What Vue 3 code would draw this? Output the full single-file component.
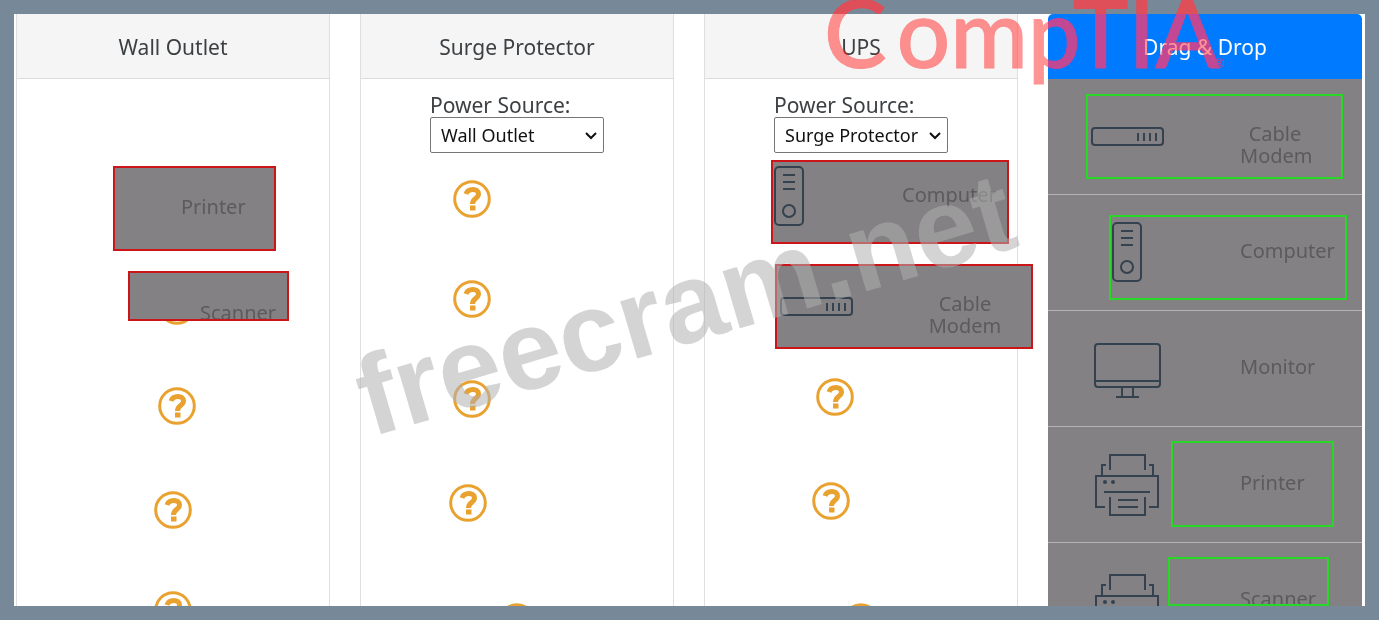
<template>
    <div class="page">
        <div class="board">
            <!-- shared device icons -->
            <svg class="sprite" aria-hidden="true">
                <symbol id="modem" viewBox="0 0 74 64">
                    <rect x="1" y="23" width="71" height="17" rx="3" />
                    <path d="M47 28v8M53 28v8M59 28v8M65 28v8" />
                </symbol>
                <symbol id="computer" viewBox="0 0 74 64">
                    <rect x="22" y="2" width="28" height="58" rx="4" />
                    <path d="M30 10h12M30 17h12M30 24h12" />
                    <circle cx="36" cy="46" r="6" />
                </symbol>
                <symbol id="monitor" viewBox="0 0 74 64">
                    <rect x="4" y="7" width="65" height="43" rx="3" />
                    <path d="M4 44h65M31 50v10M42 50v10M25 60h23" />
                </symbol>
                <symbol id="printer" viewBox="0 0 74 64">
                    <path d="M19 17V2h35v15M11 22V12h4M62 22V12h-4M14 54H5V23h62v31h-9M13 39h46" />
                    <path d="M19 44v18h35V44M27 47h20M27 54h20" />
                    <circle class="dot" cx="14" cy="29" r="2" />
                    <circle class="dot" cx="22" cy="29" r="2" />
                </symbol>
            </svg>

            <section v-for="col in columns" :key="col.title" class="column" :class="col.name">
                <h2 class="column-title">{{ col.title }}</h2>
                <div class="column-body">
                    <div v-if="col.source" class="source">
                        <label :for="col.name">Power Source:</label>
                        <div class="select-wrap">
                            <select :id="col.name" v-model="col.source">
                                <option v-for="s in sources" :key="s">{{ s }}</option>
                            </select>
                            <svg class="chevron" viewBox="0 0 12 8" aria-hidden="true"><path d="M1 1l5 5 5-5" /></svg>
                        </div>
                    </div>
                    <div class="markers">
                        <svg v-for="n in 5" :key="n" class="marker" viewBox="0 0 38 38" aria-hidden="true">
                            <circle cx="19" cy="19" r="17.3" />
                            <path d="M13 14C15 8 25.5 8 25.5 14C25.5 18.5 19.5 18 19.5 24" />
                            <rect x="17" y="25.5" width="5.5" height="5" />
                        </svg>
                    </div>
                    <div v-for="d in col.dropped" :key="d.label" class="dropped" :class="d.name">
                        <svg v-if="d.icon" class="icon"><use :href="'#' + d.icon" /></svg>
                        <span class="label">{{ d.label }}</span>
                    </div>
                </div>
            </section>

            <section class="pool">
                <h2 class="pool-title">Drag &amp; Drop</h2>
                <ul class="devices">
                    <li v-for="d in devices" :key="d.label" class="device" :class="'device-' + d.name">
                        <svg class="icon"><use :href="'#' + d.icon" /></svg>
                        <span class="label">{{ d.label }}</span>
                        <i v-if="d.marked" class="outline"></i>
                    </li>
                </ul>
            </section>
        </div>

        <div class="watermark">freecram.net</div>
        <div class="logo">
            <span class="logo-c">C</span><span>omp</span><span class="logo-tia">TIA</span><small>®</small>
        </div>
    </div>
</template>

<script setup>
import { ref } from "vue";

const sources = ["Wall Outlet", "Surge Protector", "UPS"];

const columns = ref([
    {
        name: "wall",
        title: "Wall Outlet",
        dropped: [
            { name: "printer", label: "Printer" },
            { name: "scanner", label: "Scanner" },
        ],
    },
    { name: "surge", title: "Surge Protector", source: "Wall Outlet", dropped: [] },
    {
        name: "ups",
        title: "UPS",
        source: "Surge Protector",
        dropped: [
            { name: "computer", label: "Computer", icon: "computer" },
            { name: "modem", label: "Cable Modem", icon: "modem" },
        ],
    },
]);

const devices = [
    { name: "modem", label: "Cable Modem", icon: "modem", marked: true },
    { name: "computer", label: "Computer", icon: "computer", marked: true },
    { name: "monitor", label: "Monitor", icon: "monitor", marked: false },
    { name: "printer", label: "Printer", icon: "printer", marked: true },
    { name: "scanner", label: "Scanner", icon: "printer", marked: true },
];
</script>

<style>
body {
    margin: 0;
}
</style>

<style scoped>
.page {
    position: relative;
    overflow: hidden;
}

.board {
    display: grid;
    grid-template-columns: repeat(4, minmax(0, 1fr));
    gap: 30px;
    height: 100vh;
    box-sizing: border-box;
    padding: 0 3px 0 2px;
    border: 14px solid #778899;
    background: #fff;
    overflow: hidden;
    color: #3c4043;
    font-family: "Noto Sans", "Open Sans", sans-serif;
    font-size: 20px;
    line-height: 22px;
}

.sprite {
    position: absolute;
    width: 0;
    height: 0;
}

.column {
    border: 1px solid #dfdfdf;
    border-width: 0 1px;
}

.column-title,
.pool-title {
    box-sizing: border-box;
    height: 65px;
    margin: 0;
    border-bottom: 1px solid #dcdcdc;
    background: #f5f5f5;
    font-size: 21px;
    font-weight: 400;
    line-height: 66px;
    text-align: center;
}

.column-body {
    position: relative;
}

.source {
    padding: 14px 0 0 69px;
}

.source label {
    display: block;
    height: 24px;
    font-size: 21px;
    line-height: 24px;
}

.select-wrap {
    position: relative;
    width: 174px;
}

select {
    width: 100%;
    height: 36px;
    padding: 0 10px;
    border: 1px solid #767676;
    border-radius: 2px;
    background: #fff;
    color: #111;
    font: inherit;
    font-size: 18px;
    line-height: 26px;
    appearance: none;
}

.chevron {
    position: absolute;
    top: 15px;
    right: 7px;
    width: 12px;
    height: 8px;
    fill: none;
    stroke: #111;
    stroke-width: 2;
    pointer-events: none;
}

/* unfilled drop spots */
.markers {
    display: flex;
    flex-direction: column;
    gap: 62px;
    padding: 27px 0 0 92px;
}

.wall .markers {
    padding: 108px 0 0 141px;
}

.ups .markers {
    padding: 25px 0 0 111px;
}

.marker {
    flex: none;
    width: 38px;
    height: 38px;
    fill: none;
    stroke: #e9a22f;
    stroke-width: 3;
}

.marker path {
    stroke-width: 5;
}

.marker rect {
    fill: #e9a22f;
    stroke: none;
}

.marker:nth-child(n + 4) {
    margin: 4px 0 0 -4px;
}

.marker:nth-child(5) {
    margin-top: 0;
}

.surge .marker:nth-child(5) {
    margin: 19px 0 0 45px;
}

.ups .marker:nth-child(5) {
    margin: 21px 0 0 26px;
}

.icon {
    width: 74px;
    height: 64px;
    fill: none;
    stroke: #34414e;
    stroke-width: 2;
}

.dot {
    fill: #34414e;
    stroke: none;
}

.label {
    padding-bottom: 4px;
    color: #5c5a5d;
}

/* devices dragged onto a column */
.dropped {
    position: absolute;
    z-index: 1;
    display: flex;
    align-items: center;
    box-sizing: border-box;
    height: 85px;
    border: 2px solid #cc1518;
    background: #848184;
    overflow: hidden;
}

.wall .printer {
    top: 87px;
    left: 96px;
    width: 163px;
    padding-left: 66px;
}

.wall .scanner {
    top: 192px;
    left: 111px;
    width: 161px;
    height: 50px;
    padding: 38px 0 0 70px;
}

.ups .computer {
    top: 81px;
    left: 66px;
    width: 238px;
    height: 84px;
}

.computer .icon {
    flex: none;
    margin: 0 75px 10px -20px;
}

.computer .label {
    margin-bottom: 10px;
}

.ups .modem {
    top: 185px;
    left: 70px;
    width: 258px;
}

.ups .modem .icon {
    flex: none;
    margin-left: 3px;
}

.ups .modem .label {
    width: 74px;
    margin: 20px 0 0 74px;
    text-align: center;
}

.pool-title {
    border-bottom: 0;
    border-radius: 5px 5px 0 0;
    background: #007bff;
    color: #fff;
}

.devices {
    margin: 0;
    padding: 0;
    background: #848184;
    list-style: none;
}

.device {
    position: relative;
    display: flex;
    align-items: center;
    box-sizing: border-box;
    height: 116px;
    padding-left: 43px;
    border-bottom: 1px solid #b5b3b5;
}

.device .icon {
    flex: none;
    margin-right: 75px;
}

.device-modem .label {
    width: 70px;
    padding: 16px 0 0;
    text-align: center;
}

.device-scanner {
    padding-top: 8px;
}

.device-scanner .label {
    padding-bottom: 12px;
}

/* answer outlines */
.outline {
    position: absolute;
    top: 14px;
    left: 123px;
    box-sizing: border-box;
    width: 163px;
    height: 86px;
    border: 2px solid #27d827;
}

.device-modem .outline {
    top: 15px;
    left: 38px;
    width: 257px;
    height: 85px;
}

.device-computer .outline {
    top: 20px;
    left: 61px;
    width: 238px;
    height: 85px;
}

.device-scanner .outline {
    left: 120px;
    width: 161px;
    height: 49px;
}

.watermark {
    position: absolute;
    z-index: 2;
    top: 342px;
    left: 371px;
    color: rgba(176, 176, 176, 0.54);
    font-family: "Liberation Sans", Arial, sans-serif;
    font-size: 113px;
    font-weight: 700;
    line-height: 113px;
    white-space: nowrap;
    transform: rotate(-16.4deg);
    transform-origin: 0 96px;
    pointer-events: none;
}

.logo {
    position: absolute;
    z-index: 3;
    top: -20px;
    left: 824px;
    display: flex;
    align-items: baseline;
    color: #e14a4a;
    font-family: Lato, sans-serif;
    font-size: 94px;
    font-weight: 500;
    line-height: 104px;
    white-space: nowrap;
    mix-blend-mode: hard-light;
    pointer-events: none;
    -webkit-text-stroke: 1px #e14a4a;
}

.logo-c {
    margin-right: 10px;
}

.logo-tia {
    margin-left: -8px;
}

.logo small {
    margin-left: -6px;
    font-size: 14px;
    -webkit-text-stroke: 0;
}
</style>
